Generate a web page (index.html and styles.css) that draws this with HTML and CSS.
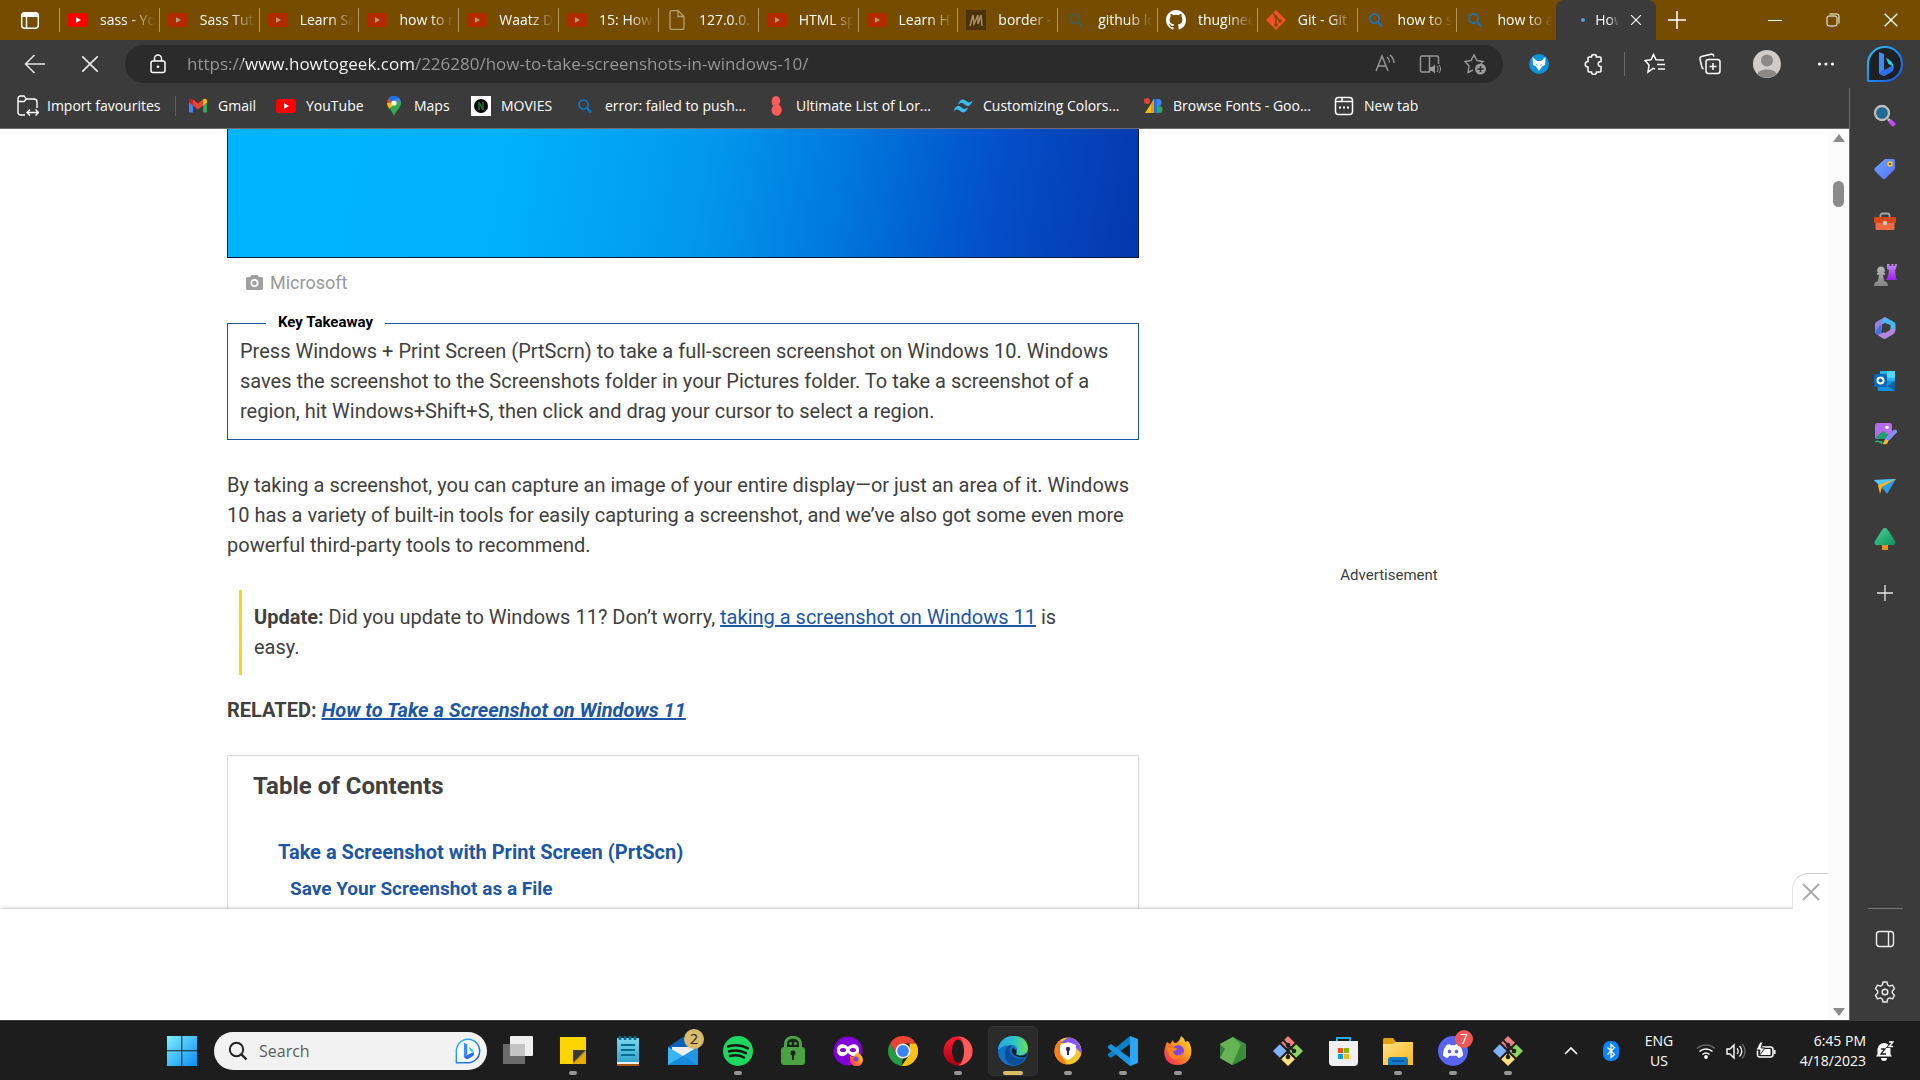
FILE: index.html
```html
<!DOCTYPE html>
<html lang="en">
<head>
<meta charset="utf-8">
<title>How to Take Screenshots in Windows 10</title>
<link rel="stylesheet" href="styles.css">
</head>
<body>
<svg class="defs" width="0" height="0" aria-hidden="true">
  <defs>
    <linearGradient id="g-blue" x1="0" y1="0" x2="1" y2="1"><stop offset="0" stop-color="#7df0ff"/><stop offset="1" stop-color="#0a8cf5"/></linearGradient>
    <linearGradient id="g-bing" x1="0" y1="0" x2="1" y2="1"><stop offset="0" stop-color="#27c4f5"/><stop offset="1" stop-color="#1b4fe0"/></linearGradient>
    <linearGradient id="g-purple" x1="0" y1="0" x2="0" y2="1"><stop offset="0" stop-color="#c78af5"/><stop offset="1" stop-color="#9a20f0"/></linearGradient>
    <linearGradient id="g-tag" x1="0" y1="0" x2="1" y2="1"><stop offset="0" stop-color="#6aa6f8"/><stop offset="1" stop-color="#5a6cf8"/></linearGradient>
    <linearGradient id="g-grey" x1="0" y1="0" x2="0" y2="1"><stop offset="0" stop-color="#b8b8b8"/><stop offset="1" stop-color="#858585"/></linearGradient>
    <linearGradient id="g-tree" x1="0" y1="0" x2="1" y2="1"><stop offset="0" stop-color="#4bd49a"/><stop offset="1" stop-color="#0e8f5c"/></linearGradient>
    <linearGradient id="g-folder" x1="0" y1="0" x2="1" y2="1"><stop offset="0" stop-color="#ffe083"/><stop offset="1" stop-color="#fbb91c"/></linearGradient>
    <linearGradient id="g-edge" x1="0" y1="0" x2="1" y2="0"><stop offset="0" stop-color="#1fa8e0"/><stop offset=".55" stop-color="#2fc3c8"/><stop offset="1" stop-color="#6be05a"/></linearGradient>
    <linearGradient id="g-fire" x1="1" y1="0" x2="0" y2="1"><stop offset="0" stop-color="#ffe23c"/><stop offset=".5" stop-color="#ff8a1c"/><stop offset="1" stop-color="#f5156c"/></linearGradient>
    <linearGradient id="g-opera" x1="0" y1="0" x2="0" y2="1"><stop offset="0" stop-color="#ff1b2d"/><stop offset="1" stop-color="#a70014"/></linearGradient>
    <linearGradient id="g-note" x1="0" y1="0" x2="0" y2="1"><stop offset="0" stop-color="#76d9f0"/><stop offset="1" stop-color="#35a5cc"/></linearGradient>
    <symbol id="youtube" viewBox="0 0 20 20"><rect y="3" width="20" height="14" rx="3" fill="#f00"/><path d="M8 7.200l5 2.800-5 2.800z" fill="#fff"/></symbol>
    <symbol id="find" viewBox="0 0 20 20"><path d="M12 12l4 4.500" stroke="currentColor" stroke-width="2" /><circle cx="8.500" cy="8.500" r="4.500" fill="none" stroke="currentColor" stroke-width="1.700"/></symbol>
    <symbol id="bing" viewBox="0 0 38 38"><path d="M2 36V19A17 17 0 1 1 19 36Z" fill="var(--bubble)" stroke="url(#g-bing)" stroke-width="2.200"/><path d="M13 7l5 2v16l-5 3.500z" fill="#3c8cf8"/><path d="M13 28.500l5 2.500 9-5.500v-5l-9 5z" fill="#49b0ff"/><path d="M20 13l2.500 6 5 2.500c-1-4.500-3-6.500-7.500-8.500z" fill="#22d0e8"/><path d="M13 28.500l5-3.500 9.500-4c1 4-1 6-9.500 10z" fill="#2b6cf0"/></symbol>
    <symbol id="cross" viewBox="0 0 20 20"><path d="M3 3l14 14M17 3L3 17" stroke="currentColor" stroke-width="1.500" fill="none"/></symbol>
    <symbol id="gitbash" viewBox="0 0 30 30"><path d="M15 0l6.800 6.800L15 13.600 8.200 6.800z" fill="#f27f80"/><path d="M23.200 8.200L30 15l-6.800 6.800L16.400 15z" fill="#8bd35f"/><path d="M6.800 8.200l6.800 6.800-6.800 6.800L0 15z" fill="#80b3ff"/><path d="M15 16.400l6.800 6.800L15 30l-6.800-6.800z" fill="#ffdf80"/><path d="M10 4l5 5v12M15 9l6 6" stroke="#1f1f1f" stroke-width="1.800" fill="none"/><circle cx="15" cy="9" r="2.300" fill="#1f1f1f"/><circle cx="21" cy="15" r="2.300" fill="#1f1f1f"/><circle cx="15" cy="21" r="2.300" fill="#1f1f1f"/></symbol>
  </defs>
</svg>

<div class="browser">
  <header class="titlebar">
    <button class="tab-menu" aria-label="Tab actions"><svg width="20" height="20" viewBox="0 0 20 20"><rect x="1.700" y="2.700" width="16.600" height="15.600" rx="3" fill="none" stroke="#fff" stroke-width="1.500"/><path d="M2 7V5a3 3 0 0 1 3-3h10a3 3 0 0 1 3 3v2z" fill="#fff"/><path d="M6.500 7v11" stroke="#fff" stroke-width="1.500"/></svg></button>
    <nav class="tabs" aria-label="Open tabs">
      <button class="tab"><svg class="i20"><use href="#youtube"/></svg><span>sass - YouTube</span></button>
      <button class="tab"><svg class="i20 dim"><use href="#youtube"/></svg><span>Sass Tutorial</span></button>
      <button class="tab"><svg class="i20 dim"><use href="#youtube"/></svg><span>Learn Sass</span></button>
      <button class="tab"><svg class="i20 dim"><use href="#youtube"/></svg><span>how to make</span></button>
      <button class="tab"><svg class="i20 dim"><use href="#youtube"/></svg><span>Waatz Dance</span></button>
      <button class="tab"><svg class="i20 dim"><use href="#youtube"/></svg><span>15: How to</span></button>
      <button class="tab"><svg class="i20 dim" viewBox="0 0 20 20"><path d="M3 2.500a2 2 0 0 1 2-2h6l6 6v11a2 2 0 0 1-2 2H5a2 2 0 0 1-2-2zM11 1v5.500h6" fill="none" stroke="#fff" stroke-width="1.300"/></svg><span>127.0.0.1:5500</span></button>
      <button class="tab"><svg class="i20 dim"><use href="#youtube"/></svg><span>HTML space</span></button>
      <button class="tab"><svg class="i20 dim"><use href="#youtube"/></svg><span>Learn HTML</span></button>
      <button class="tab"><svg class="i20" viewBox="0 0 20 20"><path d="M0 0h20v20H0z" fill="#4b320a"/><path d="M4 16L7 5l1 9 4-9v9l3-9 1 11" fill="none" stroke="#a98e62" stroke-width="1.500"/></svg><span>border - CSS</span></button>
      <button class="tab"><svg class="i20 teal"><use href="#find"/></svg><span>github login</span></button>
      <button class="tab"><svg class="i20" viewBox="0 0 16 16"><path fill="#fff" d="M8 0C3.580 0 0 3.580 0 8c0 3.540 2.290 6.530 5.470 7.590.4.070.55-.17.55-.38v-1.490c-2.010.37-2.530-.49-2.690-.94-.09-.23-.48-.94-.82-1.130-.28-.15-.68-.52-.01-.53.63-.01 1.080.58 1.230.82.72 1.210 1.870.87 2.330.66.070-.52.28-.87.51-1.070-1.780-.2-3.640-.89-3.640-3.950 0-.87.31-1.590.82-2.150-.08-.2-.36-1.020.08-2.120 0 0 .67-.21 2.200.82a7.600 7.600 0 0 1 4 0c1.530-1.040 2.200-.82 2.200-.82.44 1.100.16 1.920.08 2.120.51.56.82 1.270.82 2.150 0 3.070-1.870 3.750-3.650 3.950.29.25.54.73.54 1.480v2.200c0 .21.15.46.55.38A8 8 0 0 0 16 8c0-4.420-3.580-8-8-8z"/></svg><span>thugineer</span></button>
      <button class="tab"><svg class="i20" viewBox="0 0 20 20"><path d="M10 0l10 10-10 10L0 10z" fill="#f34f29"/><path d="M7 3l3 4v8M10 7l4 4" stroke="#754c00" stroke-width="1.500" fill="none"/><circle cx="10" cy="7" r="1.700" fill="#754c00"/><circle cx="10" cy="15" r="1.700" fill="#754c00"/><circle cx="14" cy="11" r="1.700" fill="#754c00"/></svg><span>Git - Git Docs</span></button>
      <button class="tab"><svg class="i20 blue"><use href="#find"/></svg><span>how to ss a</span></button>
      <button class="tab"><svg class="i20 blue"><use href="#find"/></svg><span>how to add</span></button>
      <div class="tab active"><i class="spinner"></i><span>How to</span><button class="tab-close" aria-label="Close tab"><svg width="14" height="14"><use href="#cross"/></svg></button></div>
    </nav>
    <button class="new-tab" aria-label="New tab"><svg width="20" height="20" viewBox="0 0 20 20"><path d="M10 1v18M1 10h18" stroke="#fff" stroke-width="1.500"/></svg></button>
    <div class="window-buttons">
      <button aria-label="Minimize"><svg width="14" height="14" viewBox="0 0 14 14"><path d="M0 7.500h14" stroke="#fff"/></svg></button>
      <button aria-label="Restore"><svg width="14" height="14" viewBox="0 0 14 14"><rect x="1" y="3" width="10" height="10" rx="2" fill="none" stroke="#fff"/><path d="M3.500 1H11a2 2 0 0 1 2 2v7.500" fill="none" stroke="#fff"/></svg></button>
      <button aria-label="Close"><svg width="18" height="18"><use href="#cross"/></svg></button>
    </div>
  </header>

  <div class="toolbar">
    <button class="tool" aria-label="Back"><svg width="22" height="22" viewBox="0 0 22 22"><path d="M21 11H2M10.500 2L1.500 11l9 9" fill="none" stroke="#e8e8e8" stroke-width="1.500"/></svg></button>
    <button class="tool" aria-label="Stop"><svg width="22" height="22"><use href="#cross"/></svg></button>
    <div class="address">
      <svg width="16" height="20" viewBox="0 0 16 20"><rect x="1" y="7" width="14" height="11.500" rx="2" fill="none" stroke="#fff" stroke-width="1.500"/><path d="M4.500 7V4.500a3.500 3.500 0 0 1 7 0V7" fill="none" stroke="#fff" stroke-width="1.500"/><circle cx="8" cy="12.700" r="1.300" fill="#fff"/></svg>
      <input class="url" type="text" aria-label="Address" value="https://www.howtogeek.com/226280/how-to-take-screenshots-in-windows-10/" spellcheck="false">
      <button aria-label="Read aloud"><svg width="22" height="22" viewBox="0 0 22 22"><path d="M2 18L8 3l6 15M4 13h8M13 4c2 1.500 2.500 3 2.500 5.500M16 2c3 2.500 4 5 4 8" fill="none" stroke="#999" stroke-width="1.400"/></svg></button>
      <button aria-label="Immersive reader"><svg width="22" height="22" viewBox="0 0 22 22"><path d="M10.500 19H3a1.500 1.500 0 0 1-1.500-1.500v-13A1.500 1.500 0 0 1 3 3h7.500zM10.500 3H18a1.500 1.500 0 0 1 1.500 1.500V11" fill="none" stroke="#999" stroke-width="1.400"/><path d="M11 14h2l3-2.500v9L13 18h-2z" fill="#999"/><path d="M18 13c1.300 1.500 1.300 4.500 0 6M20 12c2 2.500 2 5.500 0 8" fill="none" stroke="#999"/></svg></button>
      <button aria-label="Add to favourites"><svg width="22" height="22" viewBox="0 0 22 22"><path d="M9 17l-5 2.500L5 13 1 8.500l6-1L10 2l3 5.500 6 1-2 2" fill="none" stroke="#999" stroke-width="1.400"/><circle cx="16.500" cy="16" r="5.500" fill="#999"/><path d="M16.500 13v6M13.500 16h6" stroke="#2b2b2b" stroke-width="1.400"/></svg></button>
    </div>
    <div class="actions">
      <button aria-label="Extension"><svg width="20" height="20" viewBox="0 0 20 20"><circle cx="10" cy="10" r="10" fill="#0c92d8"/><path d="M3.500 3l4.500 4h4l4.500-4-.5 8-3 1.500L10 17l-3-4.500L4 11z" fill="#fff"/><path d="M7 10l2 1-1 .8zM13 10l-2 1 1 .8z" fill="#0c92d8"/></svg></button>
      <button aria-label="Extensions"><svg width="22" height="22" viewBox="0 0 22 22"><path d="M6 4h2.500a2.500 2.500 0 0 1 5 0H17a1 1 0 0 1 1 1v3.500c-3.500-.3-4 5 0 5V18a1 1 0 0 1-1 1h-3.500a2.500 2.500 0 0 1-5 0H6a1 1 0 0 1-1-1v-4a2.700 2.700 0 0 1 0-5.500V5a1 1 0 0 1 1-1z" fill="none" stroke="#fff" stroke-width="1.500"/></svg></button>
      <i class="divider"></i>
      <button aria-label="Favourites"><svg width="22" height="22" viewBox="0 0 22 22"><path d="M11 16l-2-.7-5 3.700 1-7L1 7.500l6-.8L9.500 1.500 12 6.700l8 .3M13 11.500h8M14 16h7" fill="none" stroke="#fff" stroke-width="1.500"/></svg></button>
      <button aria-label="Collections"><svg width="22" height="22" viewBox="0 0 22 22"><rect x="7" y="6.500" width="14" height="14" rx="2.500" fill="none" stroke="#fff" stroke-width="1.500"/><path d="M14 10v7M10.500 13.500h7M4.500 16C3 15.500 3 14 2.500 12.500L1 6c-.3-1.500.3-2.300 1.500-2.600L12 1.200c1.700-.4 2.500.3 3 2.300" fill="none" stroke="#fff" stroke-width="1.500"/></svg></button>
      <button class="wide" aria-label="Profile"><svg width="28" height="28" viewBox="0 0 28 28"><circle cx="14" cy="14" r="14" fill="#cfccca"/><circle cx="14" cy="10.500" r="6" fill="#8b8886"/><path d="M4.500 24c1-6 18-6 19 0a14 14 0 0 1-19 0z" fill="#8b8886"/></svg></button>
      <button class="wide" aria-label="More"><svg width="18" height="6" viewBox="0 0 18 6"><g fill="#fff"><circle cx="2.500" cy="3" r="1.600"/><circle cx="9" cy="3" r="1.600"/><circle cx="15.500" cy="3" r="1.600"/></g></svg></button>
      <button aria-label="Bing" class="wide bing-dark"><svg width="38" height="38"><use href="#bing"/></svg></button>
    </div>
  </div>

  <div class="workspace">
    <div class="main">
      <nav class="bookmarks" aria-label="Favourites bar">
        <a href="#import" class="first"><svg class="i22" viewBox="0 0 22 22"><path d="M8 20H3.500A2.500 2.500 0 0 1 1 17.500v-14A2.500 2.500 0 0 1 3.500 1H7l2.500 3H17a3 3 0 0 1 3 3v6M1 6.500h6L9.500 4M10.500 17.500h11M13 14.500l-3 3 3 3M18.500 14.500l3 3-3 3" fill="none" stroke="#fff" stroke-width="1.400"/></svg>Import favourites</a>
        <a href="#gmail"><svg class="i20" viewBox="0 0 20 20"><path d="M1 5v11.500h4V8z" fill="#4285f4"/><path d="M15 8v8.500h4V5z" fill="#34a853"/><path d="M1 5c0-2.500 2.500-3 4-1.500V9.500L1 6.500z" fill="#c5221f"/><path d="M5 3.500l5 4 5-4v6l-5 4-5-4z" fill="#ea4335"/><path d="M15 3.500c1.500-1.500 4-1 4 1.500v1.500l-4 3z" fill="#fbbc04"/></svg>Gmail</a>
        <a href="#youtube-home"><svg class="i20"><use href="#youtube"/></svg>YouTube</a>
        <a href="#maps"><svg class="i20" viewBox="0 0 20 20"><path d="M10 0a7 7 0 0 0-7 7l5 1 5-6z" fill="#ea4335"/><path d="M5 2a7 7 0 0 1 9-1L8 8z" fill="#1a73e8"/><path d="M14 1.200A7 7 0 0 1 17 7l-8 6-3-3z" fill="#4285f4"/><path d="M3 7c0 2.500 1.500 4.500 2.700 6L12 6z" fill="#fbbc04"/><path d="M17 7c0 5-5 7-7 13-1-3-2.500-5-4.300-7L15 3.500z" fill="#34a853"/><circle cx="10" cy="7" r="2.600" fill="#fff"/></svg>Maps</a>
        <a href="#movies"><svg class="i20" viewBox="0 0 20 20"><path d="M0 0h20v20H0z" fill="#fff"/><circle cx="10" cy="10" r="7" fill="#000"/><path d="M8 14V6l4 8V6" fill="none" stroke="#0b7a34" stroke-width="1.500"/></svg>MOVIES</a>
        <a href="#push"><svg class="i20 blue"><use href="#find"/></svg>error: failed to push...</a>
        <a href="#lorem"><svg class="i20" viewBox="0 0 20 20"><path d="M10 0c4 0 5.500 5 3 8.500 4 3.500 3.500 9-.5 11-6 1.500-9-5-5.300-9.500C4.500 7 5.500 0 10 0z" fill="#fb5b5b"/></svg>Ultimate List of Lor...</a>
        <a href="#colors"><svg class="i20" viewBox="0 0 20 20"><path d="M5 9c2-7 6-6 8-4 2 2 4 2 6.500-.5-2 7-6 6-8 4C9.500 6.500 7.500 6.500 5 9zM.5 15.500c2-7 6-6 8-4 2 2 4 2 6.500-.5-2 7-6 6-8 4-2-2-4-2-6.500.5z" fill="#38bdf8"/></svg>Customizing Colors...</a>
        <a href="#fonts"><svg class="i20" viewBox="0 0 20 20"><path d="M11 3v14H2z" fill="#fbbc04"/><circle cx="4" cy="5" r="3" fill="#ea4335"/><path d="M11 3v14H8V8z" fill="#f29900"/><path d="M11 3h4a3.500 3.500 0 0 1 0 7h-4z" fill="#4285f4"/><path d="M11 10h5a3.500 3.500 0 0 1 0 7h-5z" fill="#34a853"/><path d="M11 3h3v14h-3z" fill="#1a73e8"/></svg>Browse Fonts - Goo...</a>
        <a href="#new"><svg class="i20" viewBox="0 0 20 20"><rect x="1.500" y="1.500" width="17" height="17" rx="3" fill="none" stroke="#fff" stroke-width="1.500"/><path d="M2 5.500h16M8 2v3" stroke="#fff" stroke-width="1.500"/><path d="M5 11.500h2M9 11.500h2M13 11.500h2" stroke="#fff" stroke-width="2"/></svg>New tab</a>
      </nav>

      <div class="viewport">
        <div class="page">
          <div class="container">
            <main class="article">
              <figure class="hero">
                <div class="hero-image" role="img" aria-label="Windows 10 desktop background"></div>
                <figcaption><svg width="17" height="16" viewBox="0 0 17 16"><path fill="#a0a0a0" fill-rule="evenodd" d="M5.500 0h6L13 2h2.500A1.500 1.500 0 0 1 17 3.500v10a1.500 1.500 0 0 1-1.500 1.500h-14A1.500 1.500 0 0 1 0 13.500v-10A1.500 1.500 0 0 1 1.500 2H4zM8.500 4a4 4 0 1 0 0 8 4 4 0 0 0 0-8zm0 1.700a2.300 2.300 0 1 1 0 4.600 2.300 2.300 0 0 1 0-4.600z"/></svg>Microsoft</figcaption>
              </figure>
              <fieldset class="takeaway">
                <legend>Key Takeaway</legend>
                <p>Press Windows + Print Screen (PrtScrn) to take a full-screen screenshot on Windows 10. Windows saves the screenshot to the Screenshots folder in your Pictures folder. To take a screenshot of a region, hit Windows+Shift+S, then click and drag your cursor to select a region.</p>
              </fieldset>
              <p class="intro">By taking a screenshot, you can capture an image of your entire display—or just an area of it. Windows 10 has a variety of built-in tools for easily capturing a screenshot, and we’ve also got some even more powerful third-party tools to recommend.</p>
              <blockquote class="update"><strong>Update:</strong> Did you update to Windows 11? Don’t worry, <a href="#windows-11">taking a screenshot on Windows 11</a> is easy.</blockquote>
              <p class="related">RELATED: <a href="#related"><em>How to Take a Screenshot on Windows 11</em></a></p>
              <section class="toc">
                <h2>Table of Contents</h2>
                <ul>
                  <li><a href="#print-screen">Take a Screenshot with Print Screen (PrtScn)</a></li>
                  <li class="sub"><a href="#save-file">Save Your Screenshot as a File</a></li>
                </ul>
              </section>
            </main>
            <aside class="ad">Advertisement</aside>
          </div>
          <div class="banner"><button class="banner-close" aria-label="Close advertisement"><svg width="22" height="22" viewBox="0 0 22 22"><path d="M3 3l16 16M19 3L3 19" stroke="#aaa" stroke-width="2"/></svg></button></div>
        </div>
        <div class="scrollbar"><svg width="12" height="8" viewBox="0 0 12 8"><path d="M6 0l6 8H0z" fill="#8b8b8b"/></svg><i class="thumb"></i><svg class="down" width="12" height="8" viewBox="0 0 12 8"><path d="M0 0h12L6 8z" fill="#8b8b8b"/></svg></div>
      </div>
    </div>

    <aside class="sidebar">
      <button aria-label="Search"><svg width="24" height="24" viewBox="0 0 24 24"><path d="M15 15l3 3" stroke="#bbb" stroke-width="2.500"/><path d="M16.500 16.500l5 5" stroke="#c04af5" stroke-width="4"/><circle cx="9" cy="9" r="7" fill="#226a92" stroke="#bdbdbd" stroke-width="2.300"/></svg></button>
      <button aria-label="Shopping"><svg width="24" height="24" viewBox="0 0 24 24"><path d="M12 2h8a2 2 0 0 1 2 2v8L12.500 21.500a2 2 0 0 1-3 0L2 14a2 2 0 0 1 0-3z" fill="url(#g-tag)"/><circle cx="17" cy="7" r="2.700" fill="#ffc61a"/><circle cx="17" cy="7" r="1" fill="#333"/></svg></button>
      <button aria-label="Tools"><svg width="24" height="24" viewBox="0 0 24 24"><path d="M7.500 8V5.500a2 2 0 0 1 2-2h5a2 2 0 0 1 2 2V8" fill="none" stroke="#a5a5a5" stroke-width="1.800"/><rect x="2.500" y="9" width="19" height="11" rx="1.500" fill="#ee6a40"/><rect x="1" y="7" width="22" height="6" rx="1" fill="#d8481a"/><circle cx="12" cy="13" r="2.200" fill="#c9c9c9"/></svg></button>
      <button aria-label="Games"><svg width="24" height="24" viewBox="0 0 24 24"><path d="M14 1h2.500v2h2V1h2v2h1.500V1H24l-1 5-1 1 1 8 1 2H13l2-3 1-7-2-1z" fill="url(#g-purple)"/><path d="M8 3.500a4 4 0 0 1 3 6.500h1v2h-2l1 6c3 1 4 2.500 4 5H1c0-2.500 1-4 4-5l1-6H4v-2h1A4 4 0 0 1 8 3.500z" fill="url(#g-grey)"/></svg></button>
      <button aria-label="Microsoft 365"><svg width="24" height="24" viewBox="0 0 24 24"><path d="M12 1L3 6a3 3 0 0 0-1 2v9l6 3 1-11 5-5z" fill="#9a7de8"/><path d="M12 1l9 5a3 3 0 0 1 1.500 3v6l-5-1V9L9 7c0-3 1-5 3-6z" fill="#45b8f0"/><path d="M22 13v3a3 3 0 0 1-1.500 2L13 22.500a3 3 0 0 1-3 0L3 18c4 1 6-1 6-1l8-4z" fill="#b486dc"/><path d="M2.500 15L8 8v9c-1 2-4 2-5 1z" fill="#426fe0"/><path d="M12 7l5 2v5l-5 3-3-2V9z" fill="#3b3b3b"/></svg></button>
      <button aria-label="Outlook"><svg width="24" height="24" viewBox="0 0 24 24"><path d="M7 2h15v13H7z" fill="#29b2ee"/><path d="M14 2h8v7h-8z" fill="#58d4ff"/><path d="M4 12h18v10H5z" fill="#1490df"/><path d="M22 12v10l-8-5z" fill="#0b64a5"/><rect x="1" y="5" width="13" height="13" rx="1.500" fill="#0867b8"/><circle cx="7.500" cy="11.500" r="3" fill="none" stroke="#fff" stroke-width="2"/></svg></button>
      <button aria-label="Image creator"><svg width="24" height="24" viewBox="0 0 24 24"><rect x="2" y="1" width="17" height="16" rx="2.500" fill="#b66cf0"/><path d="M3 15l7-6 7 5-2 3H4z" fill="#1fa06c"/><circle cx="14" cy="5.500" r="1.800" fill="#fff"/><path d="M22 9.500l-8 8" stroke="#8a8bf2" stroke-width="4" stroke-linecap="round"/><path d="M15 18c1 4-3 5-5 4 1-4 2-5 5-4z" fill="#ffb81c"/><path d="M2 20c3-2 3 0 5 0 3-1 2 1 1 2" stroke="#24b878" stroke-width="1.500" fill="none"/></svg></button>
      <button aria-label="Drop"><svg width="24" height="24" viewBox="0 0 24 24"><path d="M1 5l22-1-9 15-4-5z" fill="#2d9cec"/><path d="M1 5l22-1L7 11z" fill="#53c5fa"/><path d="M5 10l18-6-14 8-2 7z" fill="#fbb518"/></svg></button>
      <button aria-label="E-tree"><svg width="24" height="24" viewBox="0 0 24 24"><path d="M9 16h6v6H9z" fill="#e69415"/><path d="M12 0c2 0 3 2 5 5l5 8c1.500 3-1 5-4 4H6c-3 1-5.500-1-4-4l5-8c2-3 3-5 5-5z" fill="url(#g-tree)"/></svg></button>
      <button aria-label="Customize"><svg width="16" height="16" viewBox="0 0 16 16"><path d="M8 0v16M0 8h16" stroke="#e8e8e8" stroke-width="1.300"/></svg></button>
      <i class="rule"></i>
      <button aria-label="Hide sidebar"><svg width="20" height="18" viewBox="0 0 20 18"><rect x="1.500" y="1.500" width="17" height="15" rx="3" fill="none" stroke="#eee" stroke-width="1.400"/><path d="M13.500 2v14" stroke="#eee" stroke-width="1.400"/></svg></button>
      <button aria-label="Settings"><svg width="22" height="22" viewBox="0 0 22 22"><path d="M9 1h4l.7 3 1.900 1.100 2.900-.9 2 3.400L18.300 10v2l2.200 2.400-2 3.400-2.900-.9-1.900 1.100L13 21H9l-.7-3-1.900-1.100-2.900.9-2-3.400L3.700 12v-2L1.500 7.600l2-3.400 2.900.9L8.300 4z" fill="none" stroke="#eee" stroke-width="1.400" stroke-linejoin="round"/><circle cx="11" cy="11" r="2.800" fill="none" stroke="#eee" stroke-width="1.400"/></svg></button>
    </aside>
  </div>
</div>

<footer class="taskbar">
  <button class="start" aria-label="Start"><svg width="30" height="30" viewBox="0 0 30 30"><path d="M0 0h14.300v14.300H0zM15.300 0H30v14.300H15.300zM0 15.300h14.300V30H0zM15.300 15.300H30V30H15.300z" fill="url(#g-blue)"/></svg></button>
  <label class="search"><svg width="20" height="20" viewBox="0 0 20 20"><circle cx="8.500" cy="8.500" r="6.700" fill="none" stroke="#222" stroke-width="2"/><path d="M13.500 13.500l5 5" stroke="#222" stroke-width="2.400"/></svg><input type="text" placeholder="Search" aria-label="Search"><svg width="26" height="26"><use href="#bing"/></svg></label>
  <nav class="apps" aria-label="Apps">
    <button class="app" aria-label="Task view"><svg viewBox="0 0 30 30"><rect y="8" width="22" height="20" fill="#6b6b6b"/><rect x="7" width="23" height="20" rx="1" fill="#f0f0f0"/><path d="M7 8h15v12H7z" fill="#c4c4c4"/></svg></button>
    <button class="app running" aria-label="Sticky Notes"><svg viewBox="0 0 30 30"><path d="M2 1h26v14L15 28H2z" fill="#ffd500"/><path d="M15 28l13-13v13z" fill="#e8a90a"/><path d="M15 14h13L15 27z" fill="#3a3a3a"/></svg></button>
    <button class="app" aria-label="Notepad"><svg viewBox="0 0 30 30"><path d="M4 25h22v5H4z" fill="#a85614"/><path d="M4 2h22v24H4z" fill="url(#g-note)"/><path d="M4 26h22v2H4z" fill="#eee"/><path d="M8 9h14M8 14h14M8 19h14" stroke="#0b6a90" stroke-width="2"/><path d="M7 0v4M12 0v4M17 0v4M22 0v4" stroke="#0b6a90" stroke-width="2.600"/></svg></button>
    <button class="app" aria-label="Mail"><svg viewBox="0 0 30 30"><path d="M0 11L15 1l15 10v9H0z" fill="#0a62b8"/><path d="M4 11h22v7l-11 8L4 18z" fill="#eee"/><path d="M0 11l15 9L30 11v18H0z" fill="#39b5f2"/><path d="M0 29l15-9 15-9v18z" fill="#2196e6"/><path d="M15 20l15 9H0z" fill="#1589dc"/></svg><span class="badge gold">2</span></button>
    <button class="app running" aria-label="Spotify"><svg viewBox="0 0 30 30"><circle cx="15" cy="15" r="15" fill="#1ed760"/><path d="M5 10.500c7-2 14-1.300 20 1.800M6 15.500c6-1.700 12-1 17 1.700M7 20c5-1.300 10-.7 14 1.500" fill="none" stroke="#191414" stroke-width="2.500" stroke-linecap="round"/></svg></button>
    <button class="app" aria-label="Privacy lock"><svg viewBox="0 0 30 30"><path d="M6 13V8c0-11 18-11 18 0v5" fill="#4ba143"/><rect x="3" y="11" width="24" height="18" rx="3" fill="#4ba143"/><path d="M9 11V8c0-7 12-7 12 0v3z" fill="#172618"/><circle cx="12.500" cy="7.500" r="1.500" fill="#4ba143"/><circle cx="17.500" cy="7.500" r="1.500" fill="#4ba143"/><circle cx="15" cy="17" r="2.500" fill="#172618"/><path d="M14 17h2v7h-2z" fill="#172618"/></svg></button>
    <button class="app" aria-label="Firefox private"><svg viewBox="0 0 30 30"><circle cx="15" cy="15" r="14.500" fill="#8000d7"/><path d="M4 14c0-7 8-7 11-3 3-4 11-4 11 3s-7 8-11 3c-4 5-11 4-11-3z" fill="#fff"/><ellipse cx="10" cy="14" rx="3" ry="2" fill="#8000d7"/><ellipse cx="20" cy="14" rx="3" ry="2" fill="#8000d7"/><path d="M17 20l3 1 5-5c2 3 5 4 5 8a6.500 6.500 0 0 1-13 0z" fill="url(#g-fire)"/><circle cx="23" cy="23" r="2.600" fill="#7a45d8"/></svg></button>
    <button class="app" aria-label="Chrome"><svg viewBox="0 0 30 30"><path d="M2 7.500a15 15 0 0 1 26 0H15l-6.500 11z" fill="#ea4335"/><path d="M2 7.500l6.500 11.300L15 22.500l-1.500 7.400A15 15 0 0 1 2 7.500z" fill="#269a45"/><path d="M28 7.500A15 15 0 0 1 13.500 30l8-11.200V7.500z" fill="#fbc116"/><circle cx="15" cy="15" r="7.500" fill="#fff"/><circle cx="15" cy="15" r="5.900" fill="#3b82f2"/></svg></button>
    <button class="app running" aria-label="Opera"><svg viewBox="0 0 30 30"><circle cx="15" cy="15" r="14.500" fill="url(#g-opera)"/><path d="M15 .500a14.500 14.500 0 0 1 0 29c8-2 8-27 0-29z" fill="#ff5b5b"/><ellipse cx="15" cy="15" rx="6" ry="11.500" fill="#1d1d1d"/></svg></button>
    <button class="app running current" aria-label="Edge"><svg viewBox="0 0 30 30"><circle cx="15" cy="15" r="15" fill="#1272c8"/><path d="M0 14C1-4 29-5 30 12c0 7-9 9-12 6 3-5 0-9-5-9-7 0-11 3-13 5z" fill="url(#g-edge)"/><path d="M7 17c0-6 4-8 8-8-7 3-3 16 12 13-4 9-20 12-20-5z" fill="#0c4f99"/><path d="M15 12c-4 4 2 11 13 9l2-5c-2 4-9 5-12 2 1-2 0-5-3-6z" fill="#1d1d1d"/></svg></button>
    <button class="app running" aria-label="Secure browser"><svg viewBox="0 0 30 30"><circle cx="15" cy="15" r="13.500" fill="#f6c42c"/><path d="M15 1.500A13.500 13.500 0 0 1 28 17L18 7H7z" fill="#8356f5"/><path d="M8 3.500A13.500 13.500 0 0 0 14 28.500L7 18z" fill="#fb7c1c"/><path d="M15 6l8 3v6c0 4-4 7-8 9-4-2-8-5-8-9V9z" fill="#fff"/><circle cx="15" cy="13" r="2.200" fill="#2a2a55"/><path d="M14 13h2v6h-2z" fill="#2a2a55"/></svg></button>
    <button class="app running" aria-label="Visual Studio Code"><svg viewBox="0 0 30 30"><path d="M22 0v8L3 22l-3-2v-2z" fill="#0d7fc4"/><path d="M22 30v-8L3 8l-3 2v2z" fill="#1b92dc"/><path d="M22 0l8 3v24l-8 3z" fill="#2ba6f3"/></svg></button>
    <button class="app running" aria-label="Firefox"><svg viewBox="0 0 30 30"><path d="M4 6l3 2 3-4c0 2 1 3 3 3 2-1 4-3 5-7 3 2 4 4 4 6l3-1c7 9 3 24-10 24S-2 18 4 6z" fill="url(#g-fire)"/><circle cx="15" cy="15" r="6" fill="#7d48e0"/><path d="M4 12c4-2 6 0 10 0 0 3-3 2-4 4 2 5 7 4 10 0-1 7-10 10-14 3z" fill="#ff8320"/></svg></button>
    <button class="app" aria-label="Node.js"><svg viewBox="0 0 30 30"><path d="M15 1l13 7v14l-13 7-13-7V8z" fill="#419140"/><path d="M15 1l8 8-9 20L2 22V8z" fill="#66b254"/><path d="M2 8l5 5-5 9z" fill="#33803a"/><path d="M23 9l5-1v14l-14 7z" fill="#3c8a3c"/></svg></button>
    <button class="app" aria-label="Git GUI"><svg><use href="#gitbash"/></svg></button>
    <button class="app" aria-label="Microsoft Store"><svg viewBox="0 0 30 30"><path d="M9 7V2h13v5" fill="none" stroke="#26a9e8" stroke-width="2"/><path d="M1 5h29v21a4 4 0 0 1-4 4H5a4 4 0 0 1-4-4z" fill="#f0f0f0"/><path d="M10 12h5v5h-5z" fill="#f25022"/><path d="M16 12h5v5h-5z" fill="#7fba00"/><path d="M10 18h5v5h-5z" fill="#00a4ef"/><path d="M16 18h5v5h-5z" fill="#ffb900"/></svg></button>
    <button class="app running" aria-label="File Explorer"><svg viewBox="0 0 30 30"><path d="M0 3.500A1.500 1.500 0 0 1 1.500 2H10l3 4v6H0z" fill="#e3a008"/><path d="M0 8h10l3-2h17v23H0z" fill="url(#g-folder)"/><path d="M5 29v-5a3 3 0 0 1 3-3h14a3 3 0 0 1 3 3v5z" fill="#127acb"/><path d="M9 25h12" stroke="#0a4f94" stroke-width="1.600"/></svg></button>
    <button class="app running" aria-label="Discord"><svg viewBox="0 0 30 30"><circle cx="15" cy="15" r="15" fill="#5865f2"/><path d="M10 8.500l2-.5.7 1.300h4.600L18 8l2 .5c3 .8 5 6.500 5 11-1.500 1.500-3 2.200-4.700 2.500l-1.500-2.300h-7.600L9.700 22C8 21.700 6.500 21 5 19.500c0-4.500 2-10.200 5-11z" fill="#fff"/><ellipse cx="11.500" cy="15.500" rx="1.700" ry="2" fill="#5865f2"/><ellipse cx="18.500" cy="15.500" rx="1.700" ry="2" fill="#5865f2"/></svg><span class="badge red">7</span></button>
    <button class="app running" aria-label="Git Bash"><svg><use href="#gitbash"/></svg></button>
  </nav>
  <div class="tray">
    <button class="chevron" aria-label="Hidden icons"><svg width="14" height="8" viewBox="0 0 14 8"><path d="M1 7l6-6 6 6" fill="none" stroke="#fff" stroke-width="1.700"/></svg></button>
    <button class="bluetooth" aria-label="Bluetooth"><svg width="16" height="20" viewBox="0 0 16 20"><rect width="16" height="20" rx="7" fill="#0a84ff"/><path d="M4.500 6.500l7 7L8 16.500v-13l3.500 3-7 7" fill="none" stroke="#fff" stroke-width="1.300"/></svg></button>
    <button class="lang">ENG<br>US</button>
    <button class="status" aria-label="Network, volume and battery">
      <svg width="20" height="20" viewBox="0 0 20 20"><path d="M1 7.500a13 13 0 0 1 18 0" fill="none" stroke="#666" stroke-width="1.500"/><path d="M3.500 10.500a9.500 9.500 0 0 1 13 0M6.500 13.500a5.500 5.500 0 0 1 7 0" fill="none" stroke="#fff" stroke-width="1.500"/><circle cx="10" cy="16" r="1.900" fill="#fff"/></svg>
      <svg width="20" height="20" viewBox="0 0 20 20"><path d="M1 8v5h3l4 4V4L4 8zM11 7.500c1.500 1.500 1.500 4 0 5.500M13.500 5c3 3 3 7.500 0 10.500" fill="none" stroke="#fff" stroke-width="1.400"/><path d="M16 3c4 4 4 10.500 0 14.500" fill="none" stroke="#666" stroke-width="1.400"/></svg>
      <svg width="20" height="20" viewBox="0 0 20 20"><rect x="1.500" y="6" width="15.500" height="10" rx="2.500" fill="none" stroke="#fff" stroke-width="1.500"/><rect x="4" y="8" width="10.500" height="6" fill="#fff"/><path d="M18 9h1.500v4H18z" fill="#fff"/><path d="M4 1L0 9h4l-1 6 6-8H5l2-6z" fill="#fff" stroke="#1d1d1d"/></svg>
    </button>
    <button class="clock">6:45 PM<br>4/18/2023</button>
    <button class="bell" aria-label="Notifications"><svg width="18" height="20" viewBox="0 0 18 20"><path d="M8 2a6.500 6.500 0 0 1 6.500 6v5l1.500 2.500H0L1.500 13V8A6.500 6.500 0 0 1 8 2zM5 17h6a3 3 0 0 1-6 0z" fill="#fff"/><path d="M5 8h4l-4 5h5" fill="none" stroke="#1d1d1d" stroke-width="1.300"/><path d="M13 1h4l-4 4.500h4" fill="none" stroke="#1d1d1d" stroke-width="3"/><path d="M13 1h4l-4 4.500h4" fill="none" stroke="#fff" stroke-width="1.300"/></svg></button>
  </div>
</footer>
</body>
</html>
```
FILE: styles.css
```css
* { box-sizing: border-box; }

body {
  margin: 0;
  height: 100vh;
  display: flex;
  flex-direction: column;
  overflow: hidden;
  background: #3b3b3b;
  color: #fff;
  font-family: "Open Sans", "Noto Sans", sans-serif;
  font-size: 14px;
  line-height: 20px;
}

button {
  display: flex;
  align-items: center;
  justify-content: center;
  padding: 0;
  border: 0;
  background: none;
  color: inherit;
  font: inherit;
}

input { border: 0; padding: 0; background: none; font: inherit; outline: 0; }
svg { display: block; flex: none; }
p, ul, h2, figure, blockquote { margin: 0; padding: 0; }
.defs { position: absolute; }
.i20 { width: 20px; height: 20px; }
.i22 { width: 22px; height: 22px; }
.dim { opacity: .45; }
.blue { color: #0f78d0; }
.teal { color: #3c6064; }

.browser { flex: 1; min-height: 0; display: flex; flex-direction: column; }

/* Title bar */
.titlebar { display: flex; height: 40px; background: #754c00; }
.tab-menu { width: 59px; }
.tabs { flex: 1; min-width: 0; display: grid; grid-auto-flow: column; grid-auto-columns: minmax(0, 1fr); }
.tab {
  display: flex;
  align-items: center;
  justify-content: flex-start;
  gap: 12px;
  padding: 0 4px 0 9px;
  background: linear-gradient(#b3935c, #b3935c) left center / 1px 24px no-repeat;
}
.tab span {
  flex: 1;
  min-width: 0;
  overflow: hidden;
  white-space: nowrap;
  text-align: left;
  mask-image: linear-gradient(to right, #000 55%, transparent);
}
.tab.active { gap: 10px; padding: 0 13px 0 25px; background: #3b3b3b; border-radius: 8px 8px 0 0; }
.spinner { width: 4px; height: 4px; border-radius: 50%; background: #4ba0e0; }
.new-tab { width: 42px; }
.window-buttons { display: flex; width: 222px; padding-left: 48px; }
.window-buttons button { flex: 1; }

/* Toolbar */
.toolbar { display: flex; align-items: center; height: 48px; padding: 0 6px 0 7px; }
.tool { width: 55px; color: #e8e8e8; }
.address {
  flex: 1;
  display: flex;
  align-items: center;
  height: 38px;
  margin-left: 8px;
  padding: 0 6px 0 25px;
  border-radius: 19px;
  background: #2b2b2b;
}
.url {
  flex: 1;
  min-width: 0;
  height: 36px;
  margin-left: 21px;
  padding-bottom: 2px;
  font-size: 17px;
  background: linear-gradient(to right, #999 56px, #fff 56px, #fff 227px, #999 227px);
  -webkit-background-clip: text;
  background-clip: text;
  -webkit-text-fill-color: transparent;
}
.address button { width: 45px; height: 38px; }
.actions { display: flex; align-items: center; height: 48px; margin-left: 8px; }
.actions button { width: 55px; height: 48px; }
.actions .wide { width: 59px; }
.divider { width: 1px; height: 24px; margin: 0 2px 0 3px; background: #6a6a6a; }
.bing-dark { --bubble: #1f2024; }

/* Favourites bar */
.workspace { flex: 1; min-height: 0; display: flex; }
.main { flex: 1; min-width: 0; display: flex; flex-direction: column; }
.bookmarks {
  display: grid;
  grid-template-columns: 171px 88px 108px 87px 104px 191px 187px 190px 191px 1fr;
  height: 41px;
  padding-left: 17px;
  padding-bottom: 4px;
  border-bottom: 1px solid #6c6c6c;
}
.bookmarks a { display: flex; align-items: center; gap: 10px; color: #fff; text-decoration: none; white-space: nowrap; }
.bookmarks .first { gap: 8px; background: linear-gradient(#5e5e5e, #5e5e5e) 158px center / 1px 20px no-repeat; }

/* Page */
.viewport { flex: 1; min-height: 0; display: flex; background: #fff; }
.page {
  position: relative;
  flex: 1;
  min-width: 0;
  overflow: hidden;
  color: #404040;
  font-family: Roboto, sans-serif;
  font-size: 20px;
  line-height: 30px;
}
.container { display: grid; grid-template-columns: 912px 1fr; gap: 38px; max-width: 1374px; margin: 0 auto; }
.article a { color: #1c56a6; }
.hero-image {
  height: 129px;
  border: 1px solid #061838;
  border-top: 0;
  background: linear-gradient(100deg, #00b5ff, #00b2fb 30%, #0298ee 52%, #0078dd 67%, #0350c8 83%, #0537ae);
}
.hero figcaption { display: flex; align-items: center; gap: 7px; margin: 15px 19px 20px; color: #999; font-size: 18px; line-height: 20px; }
.takeaway { margin: 0; min-width: 0; padding: 3px 12px 13px; border: 1px solid #1c56a6; }
.takeaway legend { margin-left: 26px; padding: 0 12px 2px; color: #000; font-size: 15px; font-weight: 700; line-height: 18px; }
.intro { margin: 30px 0; }
.update { margin: 0 60px 20px 12px; padding: 12px 12px 13px; border-left: 3px solid #f7d724; }
.related { margin-bottom: 30px; font-weight: 700; }
.toc { padding: 15px 25px; border: 1px solid #ddd; }
.toc h2 { margin-bottom: 36px; font-size: 24px; line-height: 30px; }
.toc ul { display: grid; gap: 7px; padding-left: 25px; list-style: none; font-weight: 700; }
.toc a { text-decoration: none; }
.toc .sub { padding-left: 12px; font-size: 19px; }
.ad { padding-top: 431px; font-size: 15px; text-align: center; }
.banner {
  position: absolute;
  inset: auto 0 0 0;
  height: 111px;
  background: #fff;
  box-shadow: 0 0 4px rgba(0, 0, 0, .35);
}
.banner-close {
  position: absolute;
  right: 0;
  bottom: 100%;
  width: 36px;
  height: 36px;
  border-top: 1px solid #ccc;
  border-left: 1px solid #e4e4e4;
  border-radius: 16px 0 0 0;
  background: #fff;
}
.scrollbar { display: flex; flex-direction: column; align-items: center; width: 21px; padding: 5px 0 4px; background: #fcfcfc; }
.thumb { width: 11px; height: 26px; margin-top: 39px; border-radius: 6px; background: #8b8b8b; }
.down { margin-top: auto; }

/* Sidebar */
.sidebar { display: flex; flex-direction: column; align-items: center; width: 71px; padding: 1px 0 2px; border-left: 1px solid #6c6c6c; }
.sidebar button { width: 70px; height: 53px; }
.rule { width: 35px; height: 1px; margin-top: auto; margin-bottom: 3px; background: #777; }

/* Taskbar */
.taskbar { display: flex; align-items: center; height: 60px; padding-left: 167px; background: #1d1d1d; border-top: 1px solid #3c3f3f; }
.search {
  display: flex;
  align-items: center;
  width: 273px;
  height: 38px;
  margin-left: 17px;
  padding: 0 6px 0 14px;
  border-radius: 19px;
  background: #f2f2f2;
  --bubble: #fff;
}
.search input { flex: 1; min-width: 0; margin-left: 11px; color: #333; font-size: 16px; }
.search input::placeholder { color: #5c5c5c; opacity: 1; }
.apps { display: flex; gap: 5px; margin-left: 6px; }
.app { position: relative; width: 50px; height: 50px; border-radius: 5px; }
.app svg { width: 30px; height: 30px; }
.app.running::after { content: ""; position: absolute; bottom: 1px; width: 8px; height: 4px; border-radius: 2px; background: #969696; }
.app.current { background: #2b2b2b; border: 1px solid #333; }
.app.current::after { width: 20px; bottom: 0; background: #dcbc68; }
.badge { position: absolute; top: 3px; right: 4px; width: 20px; height: 20px; border-radius: 50%; text-align: center; }
.badge.gold { background: #d9bb6c; color: #222; }
.badge.red { right: 5px; top: 4px; width: 18px; height: 18px; line-height: 18px; background: #ee5757; }
.tray { display: flex; align-items: center; margin-left: auto; padding-right: 26px; }
.chevron { width: 24px; }
.bluetooth { margin-left: 20px; }
.lang { width: 40px; margin-left: 20px; }
.status { gap: 10px; margin-left: 17px; }
.clock { justify-content: flex-end; width: 76px; margin-left: 14px; text-align: right; }
.bell { margin-left: 10px; }
```
